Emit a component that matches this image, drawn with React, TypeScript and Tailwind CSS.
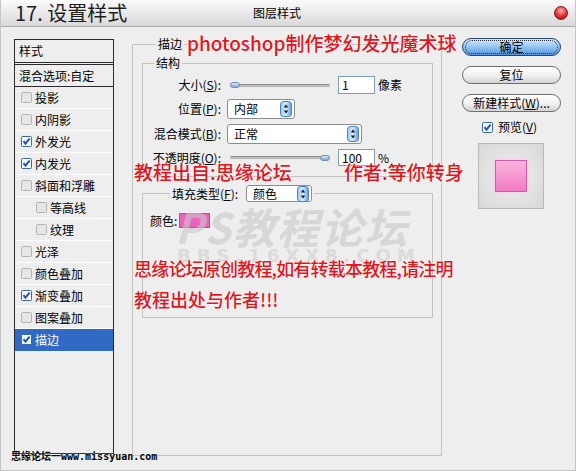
import type { ReactNode } from 'react'

const cjk = "font-['Noto_Sans_CJK_SC','Noto_Sans',sans-serif]"

const CheckBox = ({ checked }: { checked?: boolean }) => (
  <svg width="11" height="11" viewBox="0 0 11 11" className="shrink-0">
    <rect x="0.5" y="0.5" width="10" height="10" rx="1" fill={checked ? '#f4f8fc' : '#e6e6e6'} stroke={checked ? '#3b6a9a' : '#b4b4b4'} />
    {checked && <path d="M2.5 5.2 L4.5 7.6 L8.6 2.6" fill="none" stroke="#1f55b8" strokeWidth="2" />}
  </svg>
)

const Spinner = () => (
  <svg width="12" height="16" viewBox="0 0 12 16" className="shrink-0">
    <defs>
      <linearGradient id="spin" x1="0" y1="0" x2="1" y2="0">
        <stop offset="0" stopColor="#9cc8f2" />
        <stop offset="0.5" stopColor="#d8ecff" />
        <stop offset="1" stopColor="#5d9ae0" />
      </linearGradient>
    </defs>
    <rect x="0.5" y="0.5" width="11" height="15" rx="3" fill="url(#spin)" stroke="#4a7fbf" />
    <path d="M6 3.5 L8.2 6.5 L3.8 6.5 Z" fill="#1a1a1a" />
    <path d="M6 12.5 L8.2 9.5 L3.8 9.5 Z" fill="#1a1a1a" />
  </svg>
)

const Select = ({ width, text }: { width: string; text: string }) => (
  <div className={`${width} h-full flex items-center justify-between pl-[6px] pr-[2px] bg-white border border-[#8c8c8c] rounded-[3px] text-[12px] text-black`}>
    <span>{text}</span>
    <Spinner />
  </div>
)

const Slider = ({ at }: { at: 'left' | 'right' }) => (
  <div className="relative w-[100px] h-[10px] ml-[3px] flex items-center">
    <div className="w-full h-[3px] rounded-full bg-[#bdbdbd] border-t border-[#8e8e8e]" />
    <div
      className={`absolute top-[2px] w-[10px] h-[6px] rounded-full bg-linear-to-b from-[#dbe9f8] to-[#7fa6d4] border border-[#6f8fb6] ${
        at === 'left' ? 'left-0' : 'right-0'
      }`}
    />
  </div>
)

const Field = ({ value }: { value: string }) => (
  <div className="w-[37px] h-full ml-[8px] bg-white border border-[#7f9db9] pl-[3px] flex items-center text-[12px] text-black">
    {value}
  </div>
)

const Row = ({ label, height, children }: { label: ReactNode; height: string; children: ReactNode }) => (
  <div className={`flex items-center ${height}`}>
    <div className="w-[79px] text-right pr-[1px] text-[12px] text-black whitespace-nowrap">{label}</div>
    <div className="ml-[5px] flex items-center h-full">{children}</div>
  </div>
)

const styles: { name: string; checked?: boolean; indent?: boolean; active?: boolean }[] = [
  { name: '投影' },
  { name: '内阴影' },
  { name: '外发光', checked: true },
  { name: '内发光', checked: true },
  { name: '斜面和浮雕' },
  { name: '等高线', indent: true },
  { name: '纹理', indent: true },
  { name: '光泽' },
  { name: '颜色叠加' },
  { name: '渐变叠加', checked: true },
  { name: '图案叠加' },
  { name: '描边', checked: true, active: true },
]

const PillButton = ({ children, primary }: { children: ReactNode; primary?: boolean }) => (
  <div
    className={`h-[18px] w-[99px] rounded-full border flex items-center justify-center text-[12px] text-black ${
      primary
        ? 'border-[#23466f] bg-linear-to-b from-[#d4e9fd] via-[#94c4f3] to-[#4f95e0]'
        : 'border-[#6e6e6e] bg-linear-to-b from-[#ffffff] via-[#f2f2f2] to-[#d4d4d4]'
    }`}
  >
    {primary ? (
      <div className="w-[93px] h-[14px] rounded-full border border-dotted border-[#2a2a2a] flex items-center justify-center">{children}</div>
    ) : (
      children
    )}
  </div>
)

const red = "absolute text-[#e3141c] font-medium whitespace-nowrap [text-shadow:0_0_2px_#fff,0_0_1px_#fff]"

export default function App() {
  return (
    <div className={`relative w-[576px] h-[471px] overflow-hidden bg-[#eeeeee] border-l border-r border-b border-[#c6c6c6] ${cjk}`}>
      {/* title bar */}
      <div className="h-[27px] flex items-center bg-linear-to-b from-[#fbfbfb] to-[#d9d9d9] border-b border-[#a9a9a9]">
        <div className="w-[252px] pl-[14px] text-[20px] leading-[24px] text-[#1e1e1e] whitespace-nowrap">17. 设置样式</div>
        <div className="text-[12px] text-black">图层样式</div>
        <div className="flex-1" />
        <div className="mr-[7px] w-[14px] h-[14px] rounded-full border border-[#7c1b1b] bg-[radial-gradient(circle_at_50%_30%,#ffb0b0,#e23030_55%,#9c1010)]" />
      </div>

      <div className="flex pt-[10px] pl-[13px]">
        {/* style list */}
        <div className="mt-[2px] w-[100px] h-[415px] border border-[#2a2a2a] text-[12px] text-black">
          <div className="h-[25px] pl-[4px] flex items-center border-b-[3px] border-double border-[#2a2a2a]">样式</div>
          <div className="h-[22px] pl-[4px] flex items-center border-b border-[#2a2a2a]">混合选项:自定</div>
          {styles.map((s) => (
            <div
              key={s.name}
              className={`h-[22px] flex items-center gap-[3px] border-b ${s.indent ? 'pl-[21px]' : 'pl-[6px]'} ${
                s.active ? 'bg-[#316ac5] text-white border-[#316ac5]' : 'border-white'
              }`}
            >
              <CheckBox checked={s.checked} />
              <span>{s.name}</span>
            </div>
          ))}
        </div>

        {/* settings */}
        <fieldset className="ml-[18px] w-[310px] h-[419px] border border-[#c3c3c3] pl-[9px]">
          <legend className="ml-[14px] px-[2px] text-[12px] leading-[14px] text-black">描边</legend>
          <fieldset className="mt-[5px] w-[291px] border border-[#c3c3c3] pt-[6px] pb-[10px]">
            <legend className="ml-[11px] px-[2px] text-[12px] leading-[14px] text-black">结构</legend>
            <div className="flex flex-col gap-[5px]">
              <Row label={<>大小(<u>S</u>):</>} height="h-[18px]">
                <Slider at="left" />
                <Field value="1" />
                <span className="ml-[3px] text-[12px] text-black">像素</span>
              </Row>
              <Row label={<>位置(<u>P</u>):</>} height="h-[20px]">
                <Select width="w-[68px]" text="内部" />
              </Row>
              <Row label={<>混合模式(<u>B</u>):</>} height="h-[20px]">
                <Select width="w-[135px]" text="正常" />
              </Row>
              <Row label={<>不透明度(<u>O</u>):</>} height="h-[17px]">
                <Slider at="right" />
                <Field value="100" />
                <span className="ml-[3px] text-[12px] text-black">%</span>
              </Row>
            </div>
          </fieldset>
          <fieldset className="mt-[8px] w-[291px] h-[133px] border border-[#c3c3c3] pt-[11px] pl-[7px]">
            <legend className="ml-[20px] px-[2px] h-[17px] flex items-center text-[12px] text-black">
              <span>填充类型(<u>F</u>):</span>
              <div className="ml-[8px] h-[17px]">
                <Select width="w-[66px]" text="颜色" />
              </div>
            </legend>
            <div className="flex items-center h-[15px] text-[12px] text-black">
              <span>颜色:</span>
              <div className="ml-[2px] w-[31px] h-[15px] bg-[#ec63bd] border border-[#c24a98]" />
            </div>
          </fieldset>
        </fieldset>

        {/* buttons */}
        <div className="ml-[20px] mt-[1px] flex flex-col w-[99px]">
          <PillButton primary>确定</PillButton>
          <div className="mt-[10px]">
            <PillButton>复位</PillButton>
          </div>
          <div className="mt-[10px]">
            <PillButton>
              新建样式(<u>W</u>)...
            </PillButton>
          </div>
          <div className="mt-[9px] ml-[20px] flex items-center gap-[5px] text-[12px] text-black h-[12px]">
            <CheckBox checked />
            <span>预览(<u>V</u>)</span>
          </div>
          <div className="mt-[10px] ml-[16px] w-[66px] h-[66px] border border-[#b9b9b9] bg-[radial-gradient(circle,#f0f0f0,#d7d7d7)] flex items-center justify-center">
            <div className="w-[32px] h-[32px] border border-[#d35aa6] bg-linear-to-b from-[#f9b4dd] to-[#f07bc3] shadow-[0_0_4px_#f7c2e3]" />
          </div>
        </div>
      </div>

      {/* forum watermark */}
      <div className="absolute left-[174px] top-[205px] text-[42px] leading-[42px] font-bold italic text-[#c9c9c9] opacity-60 tracking-[2px] whitespace-nowrap">
        PS教程论坛
      </div>
      <div className="absolute left-[176px] top-[247px] text-[18px] leading-[18px] font-bold text-[#cfcfcf] opacity-60 tracking-[6px] whitespace-nowrap font-['DejaVu_Sans',sans-serif]">
        BBS.16XX8.COM
      </div>

      {/* red annotations */}
      <div className={`${red} left-[186px] top-[30px] text-[19px] leading-[26px]`}>photoshop制作梦幻发光魔术球</div>
      <div className={`${red} left-[133px] top-[159px] text-[19px] leading-[26px]`}>教程出自:思缘论坛</div>
      <div className={`${red} left-[343px] top-[159px] text-[19px] leading-[26px]`}>作者:等你转身</div>
      <div className={`${red} left-[133px] top-[255px] text-[18px] leading-[26px] tracking-[-0.8px]`}>思缘论坛原创教程,如有转载本教程,请注明</div>
      <div className={`${red} left-[133px] top-[286px] text-[18px] leading-[26px]`}>教程出处与作者!!!</div>

      <div className="absolute left-[10px] top-[449px] text-[10px] leading-[13px] font-bold text-black [text-shadow:0_0_2px_#fff] whitespace-nowrap">
        思缘论坛一<span className="font-['DejaVu_Sans_Mono',monospace]">www.missyuan.com</span>
      </div>
    </div>
  )
}
